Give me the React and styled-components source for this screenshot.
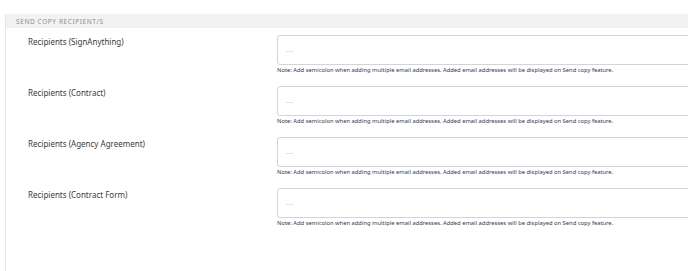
import React from "react";
import styled, { createGlobalStyle } from "styled-components";

const GlobalStyle = createGlobalStyle`
  html, body {
    margin: 0;
    padding: 0;
    background: #fff;
    font-family: "Noto Sans", "Open Sans", sans-serif;
    overflow: hidden;
  }
`;

const rows = [
  "Recipients (SignAnything)",
  "Recipients (Contract)",
  "Recipients (Agency Agreement)",
  "Recipients (Contract Form)",
];

function App() {
  return (
    <Page>
      <GlobalStyle />
      <Panel>
        <Header>Send copy recipient/s</Header>
        <Rows>
          {rows.map((label) => (
            <Row key={label}>
              <Label>{label}</Label>
              <Field>
                <Input placeholder="---" />
                <Note>
                  Note: Add semicolon when adding multiple email addresses.
                  Added email addresses will be displayed on Send copy feature.
                </Note>
              </Field>
            </Row>
          ))}
        </Rows>
      </Panel>
    </Page>
  );
}

const Page = styled.div`
  width: 688px;
  height: 271px;
  padding: 14px 0 0 5px;
  box-sizing: border-box;
`;

const Panel = styled.section`
  border-left: 1px solid #e6e6e6;
  height: 100%;
`;

const Header = styled.div`
  background: #f2f2f2;
  height: 14px;
  display: flex;
  align-items: center;
  padding-left: 10px;
  font-size: 6.5px;
  letter-spacing: 0.6px;
  text-transform: uppercase;
  color: #8e8e8e;
`;

const Rows = styled.div`
  display: flex;
  flex-direction: column;
  gap: 12px;
  padding: 7px 0 0 22px;
`;

const Row = styled.div`
  display: grid;
  grid-template-columns: 249px 1fr;
  height: 39px;
`;

const Label = styled.div`
  font-size: 8px;
  color: #3a3a3a;
  padding-top: 1px;
`;

const Field = styled.div`
  display: flex;
  flex-direction: column;
  margin-right: -6px;
`;

const Input = styled.input`
  box-sizing: border-box;
  height: 30px;
  width: 100%;
  border: 1px solid #d4d4d4;
  border-radius: 3px;
  padding: 0 8px;
  font-size: 7px;
  outline: none;
  &::placeholder {
    color: #c4c4c4;
  }
`;

const Note = styled.div`
  margin-top: 1px;
  font-size: 5.8px;
  color: #2e3a55;
  white-space: nowrap;
`;

export default App;
